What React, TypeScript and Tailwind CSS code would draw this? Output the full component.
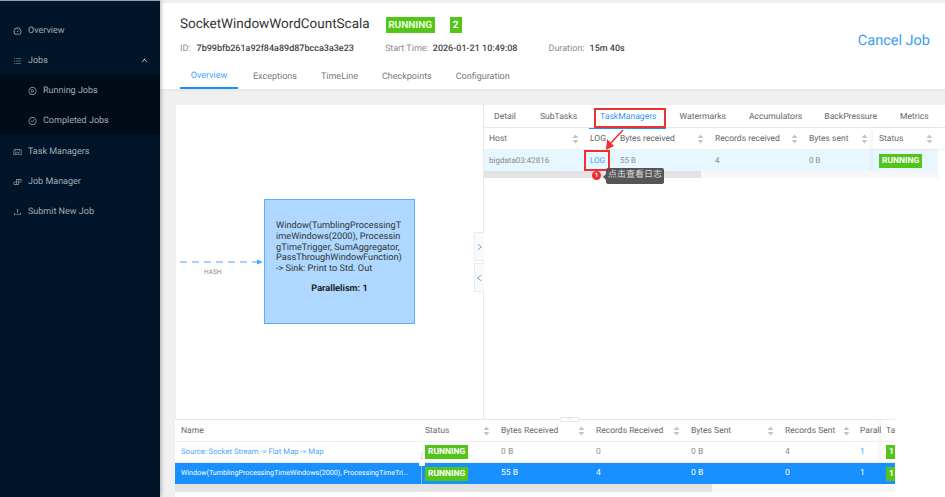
import React from "react";
import {
  AiOutlineDashboard,
  AiOutlineUnorderedList,
  AiOutlinePlayCircle,
  AiOutlineCheckCircle,
  AiOutlineSchedule,
  AiOutlineBuild,
  AiOutlineUpload,
  AiOutlineUp,
  AiOutlineLeft,
  AiOutlineRight,
} from "react-icons/ai";

function Sort({ className = "" }: { className?: string }) {
  return (
    <svg width="7" height="10" viewBox="0 0 7 10" className={className}>
      <path d="M3.5 0.5 L6.5 4 H0.5 Z" fill="#c4c4c4" />
      <path d="M3.5 9.5 L6.5 6 H0.5 Z" fill="#c4c4c4" />
    </svg>
  );
}

function Badge({ children }: { children: React.ReactNode }) {
  return (
    <span className="inline-flex h-[14px] items-center bg-[#52c41a] px-[3px] pt-[1px] text-[8.5px] font-bold leading-none text-white">
      {children}
    </span>
  );
}

function Nav({ icon, label, sub }: { icon: React.ReactNode; label: string; sub?: boolean }) {
  return (
    <div className={`flex h-[30px] items-center gap-[6px] ${sub ? "pl-[28px]" : "pl-[13px]"}`}>
      <span className="flex w-[9px] justify-center pt-[1px] text-[10px]">{icon}</span>
      <span className="pt-[4px]">{label}</span>
    </div>
  );
}

function Head({ w, label, sort = true, cls = "" }: { w: string; label: string; sort?: boolean; cls?: string }) {
  return (
    <div className={`flex shrink-0 items-center justify-between overflow-hidden pl-[6px] pr-[5px] ${w} ${cls}`}>
      <span className="whitespace-nowrap pt-[2px]">{label}</span>
      {sort && <Sort className="shrink-0" />}
    </div>
  );
}

function Cell({ w, children, cls = "" }: { w: string; children?: React.ReactNode; cls?: string }) {
  return <div className={`flex shrink-0 items-center overflow-hidden whitespace-nowrap pl-[6px] ${w} ${cls}`}>{children}</div>;
}

export default function App() {
  return (
    <div className="flex h-[497px] w-[945px] overflow-hidden bg-white font-['Roboto','Noto_Sans_CJK_SC',sans-serif] text-[8.5px] text-[#595959] [text-rendering:geometricPrecision]">
      <aside className="z-10 flex w-[160px] shrink-0 flex-col border-t-[1px] border-[#9a9fa5] bg-[#001529] pt-[14px] text-[9px] text-[#a3abb3] shadow-[1px_0_4px_rgba(0,0,0,0.3)]">
        <Nav icon={<AiOutlineDashboard />} label="Overview" />
        <div className="flex h-[30px] items-center gap-[6px] pl-[13px] pr-[12px]">
          <span className="flex w-[9px] justify-center pt-[1px] text-[10px]"><AiOutlineUnorderedList /></span>
          <span className="flex-1 pt-[4px]">Jobs</span>
          <AiOutlineUp className="text-[7px] text-white" />
        </div>
        <div className="mb-[1px] bg-[#000c17]">
          <Nav sub icon={<AiOutlinePlayCircle />} label="Running Jobs" />
          <Nav sub icon={<AiOutlineCheckCircle />} label="Completed Jobs" />
        </div>
        <Nav icon={<AiOutlineSchedule />} label="Task Managers" />
        <Nav icon={<AiOutlineBuild />} label="Job Manager" />
        <Nav icon={<AiOutlineUpload />} label="Submit New Job" />
      </aside>

      <main className="flex min-w-0 flex-1 flex-col">
        <header className="relative flex h-[90px] shrink-0 flex-col border-t-[3px] border-[#f0f0f0] border-b-[1px] border-b-[#e8e8e8] pl-[20px] shadow-[0_1px_2px_rgba(0,0,0,0.04)]">
          <div className="mt-[12px] flex h-[20px] items-center">
            <h1 className="text-[13.5px] font-normal leading-none text-[#333]">SocketWindowWordCountScala</h1>
            <span className="ml-[16px] inline-flex h-[16px] w-[49px] items-center justify-center bg-[#52c41a] text-[10px] font-bold text-[#e8ffd8]">RUNNING</span>
            <span className="ml-[15px] inline-flex h-[16px] w-[12px] items-center justify-center bg-[#52c41a] text-[10px] font-bold text-white">2</span>
          </div>
          <div className="mt-[7px] flex h-[16px] items-center text-[9px] text-[#8c8c8c]">
            <span>ID:</span>
            <b className="ml-[6px] font-medium text-[#444]">7b99bfb261a92f84a89d87bcca3a3e23</b>
            <span className="ml-[31px]">Start Time:</span>
            <b className="ml-[4px] font-medium text-[#444]">2026-01-21 10:49:08</b>
            <span className="ml-[31px]">Duration:</span>
            <b className="ml-[5px] font-medium text-[#444]">15m 40s</b>
          </div>
          <div className="mt-[8px] flex flex-1 items-stretch text-[9px] text-[#7a7a7a]">
            <div className="flex w-[58px] items-center justify-center border-b-2 border-[#1890ff] pt-[1px] text-[#40a0ff]">Overview</div>
            <div className="ml-[15px] flex items-center pt-[1px]">Exceptions</div>
            <div className="ml-[24px] flex items-center pt-[1px]">TimeLine</div>
            <div className="ml-[24px] flex items-center pt-[1px]">Checkpoints</div>
            <div className="ml-[24px] flex items-center pt-[1px]">Configuration</div>
          </div>
          <div className="absolute right-[15px] top-[27px] text-[14.5px] text-[#3b9cf5]">Cancel Job</div>
        </header>

        <div className="flex min-h-0 flex-1 flex-col bg-[#f0f0f0]">
          <div className="ml-[16px] mt-[15px] flex h-[314px] shrink-0 bg-white">
            <section className="relative w-[308px] shrink-0 border-r border-[#e8e8e8]">
              <svg width="84" height="6" viewBox="0 0 84 6" className="absolute left-[4px] top-[154px]">
                <line x1="0" y1="3" x2="78" y2="3" stroke="#4ea5fa" strokeWidth="1" strokeDasharray="7 5" />
                <path d="M77 0.5 L83 3 L77 5.5 Z" fill="#4ea5fa" />
              </svg>
              <span className="absolute left-[28px] top-[163px] text-[6.5px] text-[#888]">HASH</span>
              <div className="absolute left-[88px] top-[94px] flex h-[125px] w-[151px] flex-col border border-[#5aaefc] bg-[#aed8ff] px-[11px] pt-[21px] text-[9.2px] leading-[10.8px] text-[#333]">
                <div className="whitespace-nowrap">Window(TumblingProcessingT<br />imeWindows(2000), Processin<br />gTimeTrigger, SumAggregator,<br />PassThroughWindowFunction)<br />-&gt; Sink: Print to Std. Out</div>
                <div className="mt-[9px] text-center font-bold text-[#222]">Parallelism: 1</div>
              </div>
              <div className="absolute left-[298px] top-[127px] flex h-[29px] w-[10px] items-center justify-center border border-r-0 border-[#ececec] bg-[#fafafa] text-[10px] text-[#3f9ffa]"><AiOutlineRight /></div>
              <div className="absolute left-[298px] top-[158px] flex h-[29px] w-[10px] items-center justify-center border border-r-0 border-[#ececec] bg-[#fafafa] text-[10px] text-[#3f9ffa]"><AiOutlineLeft /></div>
            </section>

            <section className="relative flex-1">
              <div className="flex h-[23px] items-center border-b border-[#e8e8e8] pl-[10px] pt-[2px] text-[8.6px] text-[#666]">
                <span>Detail</span>
                <span className="ml-[24px]">SubTasks</span>
                <span className="relative ml-[23px] flex h-[21px] items-center text-[#2f95f5]">
                  TaskManagers
                  <span className="absolute bottom-[-1px] left-[-11px] right-[-9px] h-[1px] bg-[#1890ff]" />
                </span>
                <span className="ml-[23px]">Watermarks</span>
                <span className="ml-[23px]">Accumulators</span>
                <span className="ml-[22px]">BackPressure</span>
                <span className="ml-[23px]">Metrics</span>
              </div>
              <div className="flex h-[22px] items-stretch border-b border-[#eee] text-[8.5px] text-[#666]">
                <Head w="w-[100px]" cls="!pl-[5px]" label="Host" />
                <Head w="w-[30px]" label="LOG" sort={false} />
                <Head w="w-[95px]" label="Bytes received" />
                <Head w="w-[94px]" label="Records received" />
                <Head w="w-[70px]" label="Bytes sent" />
                <Head w="w-[65px]" label="Status" cls="shadow-[-3px_0_3px_rgba(0,0,0,0.04)]" />
              </div>
              <div className="flex h-[21px] w-[454px] items-stretch bg-[#e6f7ff] text-[8px] text-[#8c8c8c]">
                <Cell w="w-[100px]" cls="!pl-[5px]">bigdata03:42816</Cell>
                <Cell w="w-[30px]"><span className="text-[#3f9ffa]">LOG</span></Cell>
                <Cell w="w-[95px]">55 B</Cell>
                <Cell w="w-[94px]">4</Cell>
                <Cell w="w-[70px]">0 B</Cell>
                <Cell w="w-[65px]" cls="shadow-[-3px_0_3px_rgba(0,0,0,0.04)]"><Badge>RUNNING</Badge></Cell>
              </div>
              <div className="h-[7px] w-[454px] bg-[#f7f7f7]">
                <div className="h-full w-[217px] bg-[#e3e3e3]" />
              </div>

              <div className="absolute left-[110px] top-[3px] h-[20px] w-[72px] border-2 border-[#ee3030]" />
              <div className="absolute left-[100px] top-[45px] h-[21px] w-[26px] border-2 border-[#ee3030]" />
              <svg width="30" height="26" viewBox="0 0 30 26" className="absolute left-[115px] top-[23px]">
                <path d="M24 2 L10 17" stroke="#ee3030" strokeWidth="1.5" />
                <path d="M7 22 L8 11 L15 18 Z" fill="#ee3030" />
              </svg>
              <div className="absolute left-[108px] top-[66px] flex h-[9px] w-[9px] items-center justify-center rounded-full bg-[#ee3030] text-[6px] font-bold text-white">1</div>
              <div className="absolute left-[122px] top-[63px] flex h-[16px] w-[58px] items-center justify-center rounded-[2px] bg-[#555] text-[9px] text-[#ddd]">点击查看日志</div>
              <div className="absolute left-[119px] top-[69px] h-0 w-0 border-y-[3px] border-r-[3px] border-y-transparent border-r-[#555]" />
            </section>
          </div>

          <div className="flex min-h-0 flex-1">
            <div className="w-[15px] shrink-0" />
            <div className="relative w-[720px] shrink-0 overflow-visible border-t border-[#e8e8e8] bg-white text-[8.5px]">
              <div className="absolute left-[385px] top-[-3px] flex h-[5px] w-[19px] items-center justify-center rounded-[1px] border border-[#e8e8e8] bg-white text-[6px] leading-none text-[#666]">···</div>
              <div className="flex h-[22px] w-[720px] items-stretch overflow-hidden border-b border-[#eee] text-[#666]">
                <Cell w="w-[247px]"><span className="pt-[2px]">Name</span></Cell>
                <Head w="w-[73px]" cls="!pl-[3px]" label="Status" />
                <Head w="w-[95px]" label="Bytes Received" />
                <Head w="w-[95px]" label="Records Received" />
                <Head w="w-[94px]" label="Bytes Sent" />
                <Head w="w-[76px]" label="Records Sent" />
                <Cell w="w-[26px]" cls="!pl-[5px]"><span className="pt-[2px]">Parallelism</span></Cell>
                <Cell w="w-[14px]" cls="!pl-[5px] shadow-[-3px_0_3px_rgba(0,0,0,0.04)]"><span className="pt-[2px]">Tasks</span></Cell>
              </div>
              <div className="flex h-[21px] w-[720px] items-stretch overflow-hidden border-b border-[#eee] text-[#8c8c8c]">
                <Cell w="w-[247px]" cls="text-[7.7px]"><span className="text-[#4ea5fa]">Source: Socket Stream -&gt; Flat Map -&gt; Map</span></Cell>
                <Cell w="w-[73px]" cls="!pl-[3px]"><Badge>RUNNING</Badge></Cell>
                <Cell w="w-[95px]">0 B</Cell>
                <Cell w="w-[95px]">0</Cell>
                <Cell w="w-[94px]">0 B</Cell>
                <Cell w="w-[76px]">4</Cell>
                <Cell w="w-[26px]" cls="!pl-[5px]"><span className="text-[#4ea5fa]">1</span></Cell>
                <Cell w="w-[14px]" cls="!pl-[5px] shadow-[-3px_0_3px_rgba(0,0,0,0.04)]"><Badge>1</Badge></Cell>
              </div>
              <div className="flex h-[21px] w-[720px] items-stretch overflow-hidden bg-[#1890ff] text-white">
                <Cell w="w-[247px]" cls="border-r border-[#7fc0fb] text-[7.15px]">Window(TumblingProcessingTimeWindows(2000), ProcessingTimeTri...</Cell>
                <Cell w="w-[73px]" cls="!pl-[3px]"><Badge>RUNNING</Badge></Cell>
                <Cell w="w-[95px]">55 B</Cell>
                <Cell w="w-[95px]">4</Cell>
                <Cell w="w-[94px]">0 B</Cell>
                <Cell w="w-[76px]">0</Cell>
                <Cell w="w-[26px]" cls="!pl-[5px]">1</Cell>
                <Cell w="w-[14px]" cls="!pl-[5px]"><Badge>1</Badge></Cell>
              </div>
              <div className="h-[8px] w-full bg-[#f7f7f7]">
                <div className="h-full w-[537px] bg-[#e3e3e3]" />
              </div>
              <div className="absolute left-[244px] top-[26px] flex h-[20px] w-[6px] items-center justify-center rounded-[1px] bg-white text-[7px] leading-none text-[#555] shadow-[0_0_1px_rgba(0,0,0,0.3)]">⋮</div>
            </div>
            <div className="flex-1 bg-white" />
          </div>
        </div>
      </main>
    </div>
  );
}
